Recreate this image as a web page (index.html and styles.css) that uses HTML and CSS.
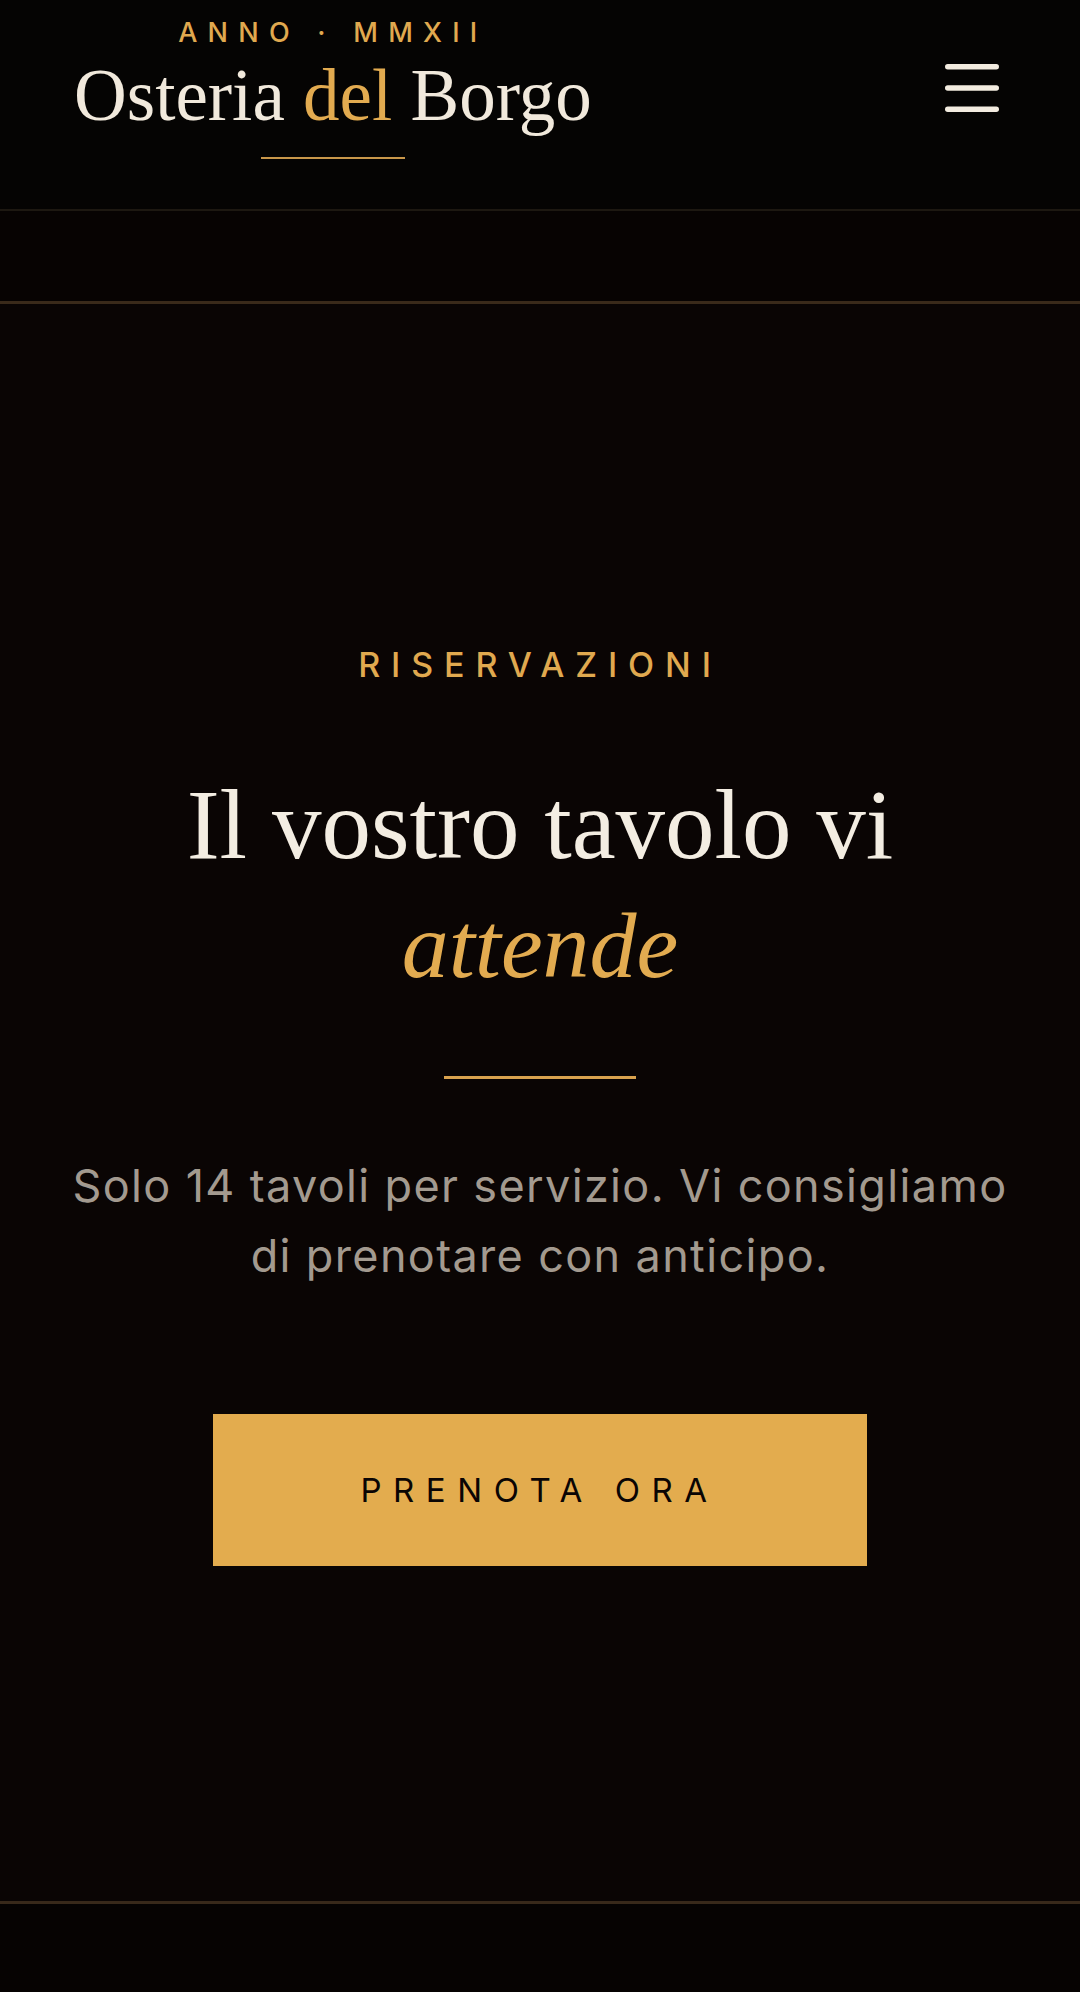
FILE: index.html
```html
<!DOCTYPE html>
<html lang="it">

<head>
  <meta charset="UTF-8">
  <meta name="viewport" content="width=device-width, initial-scale=1.0">
  <title>Osteria del Borgo</title>
  <link rel="stylesheet" href="styles.css">
</head>

<body>
  <div id="header">
    <a href="#" class="brand">
      <div class="brand-year">ANNO · MMXII</div>
      <div class="brand-name">Osteria <span class="gold">del</span> Borgo</div>
      <div class="brand-rule"></div>
    </a>
    <button class="menu-btn" aria-label="Menu">
      <svg width="54" height="48" viewBox="0 0 54 48">
        <line x1="2.75" y1="2.75" x2="51.25" y2="2.75" />
        <line x1="2.75" y1="24" x2="51.25" y2="24" />
        <line x1="2.75" y1="45.25" x2="51.25" y2="45.25" />
      </svg>
    </button>
  </div>

  <div class="band"></div>

  <section id="reservations">
    <div class="eyebrow">RISERVAZIONI</div>
    <h2>Il vostro tavolo vi<br><em>attende</em></h2>
    <div class="divider"></div>
    <p>Solo 14 tavoli per servizio. Vi consigliamo di prenotare con anticipo.</p>
    <a href="#" class="btn">PRENOTA ORA</a>
  </section>

  <div id="footer"></div>
</body>

</html>
```

FILE: styles.css
```css
body {
  margin: 0;
  background-color: #060302;
  font-family: Inter, "Noto Sans", sans-serif;
  color: #f3ece1;
}

a {
  text-decoration: none;
  color: inherit;
}

#header {
  display: flex;
  justify-content: space-between;
  align-items: center;
  background-color: #050403;
  padding: 16px 81px 50px 74px;
  border-bottom: 2px solid #1d1811;
}

.brand {
  display: flex;
  flex-direction: column;
  align-items: center;
}

.brand-year {
  font-size: 27px;
  font-weight: 500;
  letter-spacing: 0.38em;
  color: #e0a94f;
  line-height: 33px;
}

.brand-name {
  font-family: "Liberation Serif", serif;
  font-size: 73px;
  line-height: 1;
  margin-top: 10px;
  color: #f1e9dc;
}

.gold {
  color: #e2ab50;
}

.brand-rule {
  width: 144px;
  height: 2px;
  margin-top: 25px;
  background-color: #c9974a;
}

.menu-btn {
  background: none;
  border: none;
  padding: 0;
  display: flex;
}

.menu-btn line {
  stroke: #f3ece0;
  stroke-width: 5.5;
  stroke-linecap: round;
}

.band {
  height: 90px;
  background-color: #070302;
  border-bottom: 3px solid #3a2a1a;
}

section {
  background-color: #0a0504;
  padding: 340px 60px 335px;
  text-align: center;
  border-bottom: 3px solid #38291a;
}

.eyebrow {
  font-size: 34px;
  font-weight: 500;
  letter-spacing: 0.32em;
  color: #e0a94f;
  line-height: 41px;
}

h2 {
  font-family: "Liberation Serif", serif;
  font-weight: normal;
  font-size: 99px;
  line-height: 119px;
  margin: 80px 0 0;
  color: #f3ede2;
}

h2 em {
  font-size: 94px;
  color: #e2ab50;
}

.divider {
  width: 192px;
  height: 3px;
  margin: 71px auto 0;
  background-color: #d9a24e;
}

p {
  font-size: 45px;
  line-height: 70px;
  letter-spacing: 0.03em;
  margin: 72px 0 0;
  color: #a39a8f;
}

.btn {
  display: inline-block;
  margin-top: 123px;
  padding: 56px 148px 56px 147px;
  background-color: #e3ac4e;
  color: #0a0504;
  font-size: 33px;
  line-height: 40px;
  letter-spacing: 0.35em;
}

#footer {
  height: 90px;
  background-color: #060302;
}
```
